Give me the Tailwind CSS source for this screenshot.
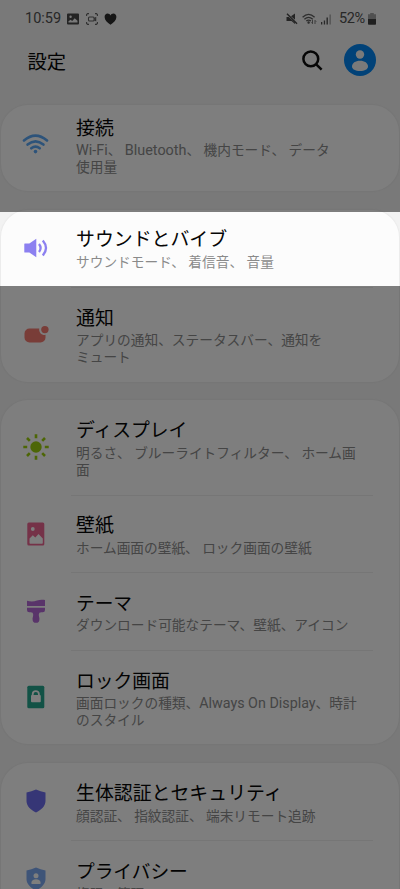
<!DOCTYPE html>
<html lang="ja">
<head>
<meta charset="utf-8">
<title>設定</title>
<script src="https://cdn.jsdelivr.net/npm/@tailwindcss/browser@4"></script>
</head>
<body class="bg-[#f2f2f2]">
<div class="relative flex h-[889px] w-[400px] flex-col overflow-hidden bg-[#f2f2f2] font-['Roboto','Noto_Sans_CJK_JP',sans-serif] text-[#060606]">

  <!-- Status bar -->
  <header class="flex h-[36px] shrink-0 items-center pt-[1px] pr-[24px] pl-[25px] text-[#505050]">
    <span class="w-[42px] pt-[1px] text-[14.5px]">10:59</span>
    <svg class="size-[12px]" viewBox="0 0 12 12"><path fill="#484848" fill-rule="evenodd" d="M1 .5h10q1 0 1 1v9q0 1-1 1H1q-1 0-1-1v-9q0-1 1-1ZM1.5 9.5h9V7.8L7.7 5.2 5.2 8 3.6 6.7 1.5 8.3ZM3.6 2.5a1.2 1.2 0 1 0 0 2.4 1.2 1.2 0 0 0 0-2.4Z"/></svg>
    <svg class="ml-[7px] size-[12px]" viewBox="0 0 12 12" fill="none" stroke="#606060" stroke-width="1.1"><path d="M.6 3V1.6L1.6.6H3M9 .6h1.4l1 1V3M11.4 9v1.4l-1 1H9M3 11.4H1.6l-1-1V9"/><rect x="2.5" y="4" width="5.6" height="4" rx="1"/><path d="m8 5.6 1.7-1v3L8 6.8"/></svg>
    <svg class="ml-[6px] h-[12px] w-[13px]" viewBox="0 0 13 12"><path fill="#2c2c2c" d="M6.5 11.8C3.2 9.6.6 7 .6 4c0-2 1.4-3.4 3-3.4 1.3 0 2.3.7 2.9 1.8C7.1 1.3 8.1.6 9.4.6c1.6 0 3 1.4 3 3.4 0 3-2.6 5.600-5.900 7.800Z"/></svg>
    <div class="ml-auto flex items-center">
      <svg class="size-[12px]" viewBox="0 0 12 12"><path fill="#484848" d="M.5 4h2.200L9 9.500V11L5.500 8H.5ZM5 3.300 9 .6v6.200Z"/><path d="m1 .8 10 10" stroke="#484848" stroke-width="1.400"/></svg>
      <svg class="ml-[4px] h-[12px] w-[15px]" viewBox="0 0 15 12" fill="none" stroke="#5c5c5c" stroke-width="1.300"><path d="M.6 4.200q6-5.600 12 0M2.400 6.300q4.200-3.800 8.400 0M4.300 8.100q2.300-2 4.600 0"/><circle cx="6.600" cy="9.600" r=".6" fill="#484848"/><path stroke-width=".8" d="M10.500 7v3.600l-1.200-1.200M13 11V7.400l1.200 1.200"/></svg>
      <svg class="ml-[4px] h-[12px] w-[11px]" viewBox="0 0 11 12"><path fill="#505050" d="M0 9h1.300v2.500H0ZM2.800 7.500h1.300v4H2.800ZM5.500 4.500h1.400v7H5.500Z"/><path fill="#a0a0a0" d="M8.500 1.500h1.300v10H8.500Z"/></svg>
      <span class="ml-[7px] w-[29px] pt-[1px] text-[14.500px] tracking-[-0.400px]">52%</span>
      <svg class="h-[12px] w-[8px]" viewBox="0 0 8 12"><path fill="#a0a0a0" d="M2.200 0h3.600v1.200H8V6H0V1.200h2.200Z"/><path fill="#404040" d="M0 6h8v5q0 .8-.8.8H.8Q0 11.800 0 11Z"/></svg>
    </div>
  </header>

  <!-- Title bar -->
  <div class="flex h-[68.500px] shrink-0 items-start pr-[24px] pl-[27.500px]">
    <h1 class="mt-[13.500px] text-[19.300px] leading-[26px]">設定</h1>
    <svg class="mt-[13.500px] ml-auto size-[21px]" viewBox="0 0 21 21" fill="none" stroke="#0c0c0c" stroke-width="2.500"><circle cx="8.800" cy="8.900" r="7.400"/><path d="m14 14.200 5.600 5.500"/></svg>
    <svg class="mt-[8px] ml-[21px] size-[32px]" viewBox="0 0 32 32"><circle cx="16" cy="16" r="16" fill="#0285f0"/><circle cx="16" cy="10.500" r="4.200" fill="#f4f4f4"/><path fill="#f4f4f4" d="M8 22.500c0-3.300 3.400-5.700 8-5.700s8 2.400 8 5.700c0 2.700-3.400 4.600-8 4.600s-8-1.900-8-4.600Z"/></svg>
  </div>

  <main class="flex flex-col gap-[18.500px] px-px">
    <section class="rounded-[27px] bg-[#fcfcfc] shadow-[0_0_1px_1px_#ebebeb]">
      <div class="flex h-[86.500px]">
        <div class="flex w-[75px] shrink-0 items-center pb-[7px] pl-[21px]">
          <svg class="h-[20px] w-[27px]" viewBox="0 0 27 20" fill="none" stroke="#5aa7f4" stroke-width="2.600" stroke-linecap="round"><path d="M2 6.500Q13.500-3.300 25 6.500M5.600 10.600Q13.500 4 21.400 10.600M9.300 14.300q4.200-3.400 8.400 0"/><circle cx="13.500" cy="17.600" r="1.800" fill="#5aa7f4" stroke="none"/></svg>
        </div>
        <div class="pt-[12px] whitespace-nowrap">
          <h2 class="text-[18.900px] leading-[24px]">接続</h2>
          <p class="mt-[1.500px] text-[13.700px] leading-[17px] text-[#8a8a8a]"><span class="text-[14.400px]">Wi-Fi</span>、 <span class="text-[14.400px]">Bluetooth</span>、 機内モード、 データ<br>使用量</p>
        </div>
      </div>
    </section>

    <section class="rounded-[27px] bg-[#fcfcfc] shadow-[0_0_1px_1px_#ebebeb]">
      <div class="flex h-[77.500px]">
        <div class="flex w-[75px] shrink-0 items-center pl-[23px]">
          <svg class="h-[20px] w-[24px]" viewBox="0 0 24 20"><path fill="#8c80f0" d="M.8 5.500h4.500L12.300.8v18.400l-7-4.700H.8q-.5 0-.5-.5V6q0-.5.500-.5Z"/><path d="M15 6q3.200 4 0 8M18.800 2.500q6.400 7.500 0 15" fill="none" stroke="#8c80f0" stroke-width="2.300"/></svg>
        </div>
        <div class="pt-[18.500px] whitespace-nowrap">
          <h2 class="text-[18.900px] leading-[24px]">サウンドとバイブ</h2>
          <p class="mt-[2px] text-[13.700px] leading-[17px] text-[#8a8a8a]">サウンドモード、 着信音、 音量</p>
        </div>
      </div>
      <div class="mr-[26px] ml-[70px] h-px bg-[#ececec]"></div>
      <div class="flex h-[93.500px]">
        <div class="flex w-[75px] shrink-0 items-center pb-[2px] pl-[23px]">
          <svg class="h-[18px] w-[26px]" viewBox="0 0 26 18"><path fill="#f27a70" d="M5.500 3.500h9.800a5.200 5.200 0 0 0 6.200 6.300v2.700a5 5 0 0 1-5 5H5.500a5 5 0 0 1-5-5v-4a5 5 0 0 1 5-5Z"/><circle cx="20.900" cy="4.600" r="3.700" fill="#f27a70"/></svg>
        </div>
        <div class="pt-[18.500px] whitespace-nowrap">
          <h2 class="text-[18.900px] leading-[24px]">通知</h2>
          <p class="mt-[1.500px] text-[13.700px] leading-[17px] text-[#8a8a8a]">アプリの通知、ステータスバー、通知を<br>ミュート</p>
        </div>
      </div>
    </section>

    <section class="rounded-[27px] bg-[#fcfcfc] shadow-[0_0_1px_1px_#ebebeb]">
      <div class="flex h-[94.500px]">
        <div class="flex w-[75px] shrink-0 items-center pl-[21.500px]">
          <svg class="size-[26px]" viewBox="0 0 26 26" stroke="#9bcc0c" stroke-width="2.600"><circle cx="13" cy="13" r="5.700" fill="#9bcc0c" stroke="none"/><path d="M13 .3v3.900M13 21.800v3.900M.3 13h3.900M21.800 13h3.900M4 4l2.800 2.800M19.200 19.200 22 22M4 22l2.800-2.800M19.200 6.800 22 4"/></svg>
        </div>
        <div class="pt-[19px] whitespace-nowrap">
          <h2 class="text-[18.800px] leading-[24px]">ディスプレイ</h2>
          <p class="mt-[1.500px] text-[13.700px] leading-[17px] text-[#8a8a8a]">明るさ、 ブルーライトフィルター、 ホーム画<br>面</p>
        </div>
      </div>
      <div class="mr-[26px] ml-[70px] h-px bg-[#ececec]"></div>
      <div class="flex h-[76.500px]">
        <div class="flex w-[75px] shrink-0 items-center pl-[26px]">
          <svg class="h-[24px] w-[18px]" viewBox="0 0 18 24"><rect x=".3" y=".5" width="17" height="23" rx="1.500" fill="#ea6490"/><circle cx="5.800" cy="7" r="1.900" fill="#fcfcfc"/><path fill="#fcfcfc" d="M2.500 21v-4.500l3.300-3.200 2.500 2.300 3.200-3.600 4.300 4.500V21q0 .8-.8.800H3.300q-.8 0-.8-.8Z"/></svg>
        </div>
        <div class="pt-[18px] whitespace-nowrap">
          <h2 class="text-[18.900px] leading-[24px]">壁紙</h2>
          <p class="mt-[2px] text-[13.700px] leading-[17px] text-[#8a8a8a]">ホーム画面の壁紙、 ロック画面の壁紙</p>
        </div>
      </div>
      <div class="mr-[26px] ml-[70px] h-px bg-[#ececec]"></div>
      <div class="flex h-[76.500px]">
        <div class="flex w-[75px] shrink-0 items-center pl-[26px]">
          <svg class="h-[24px] w-[18px]" viewBox="0 0 18 24"><path fill="#b268d4" d="M0 1.700c4 1.200 7 .8 10-.2 3-.9 5.500-1 8-.4v6H0ZM0 8.800h18v2.200q0 2.200-2.200 2.200h-1.600q-2.400 0-2.400 2.200 0 1.600.4 2.800.4 1.400.2 2.200a3.400 3.400 0 0 1-6.800 0q-.2-.8.2-2.200.4-1.200.4-2.800 0-2.200-2.400-2.200H2.200Q0 13.200 0 11Z"/></svg>
        </div>
        <div class="pt-[18.500px] whitespace-nowrap">
          <h2 class="text-[18.700px] leading-[24px]">テーマ</h2>
          <p class="mt-[1.500px] text-[13.700px] leading-[17px] text-[#8a8a8a]">ダウンロード可能なテーマ、壁紙、アイコン</p>
        </div>
      </div>
      <div class="mr-[26px] ml-[70px] h-px bg-[#ececec]"></div>
      <div class="flex h-[93.500px]">
        <div class="flex w-[75px] shrink-0 items-center pl-[26px]">
          <svg class="h-[24px] w-[18px]" viewBox="0 0 18 24"><rect x=".3" y=".7" width="17" height="22.600" rx="1.500" fill="#24a48c"/><path d="M5.700 11V9.200a3.100 3.100 0 0 1 6.200 0V11" fill="none" stroke="#fcfcfc" stroke-width="1.800"/><rect x="4" y="10" width="9.800" height="7.300" rx="1" fill="#fcfcfc"/></svg>
        </div>
        <div class="pt-[19px] whitespace-nowrap">
          <h2 class="text-[18.800px] leading-[24px]">ロック画面</h2>
          <p class="mt-[1px] text-[13.700px] leading-[17px] text-[#8a8a8a]">画面ロックの種類、<span class="text-[14.300px]">Always On Display</span>、時計<br>のスタイル</p>
        </div>
      </div>
    </section>

    <section class="rounded-t-[27px] bg-[#fcfcfc] shadow-[0_0_1px_1px_#ebebeb]">
      <div class="flex h-[77.500px]">
        <div class="flex w-[75px] shrink-0 items-center pl-[25px]">
          <svg class="h-[24px] w-[20px]" viewBox="0 0 20 24"><path fill="#6c6cec" d="M10 .5q4.500 2 9.500 3V12c0 5-4.200 9-9.500 11.500C4.700 21 .5 17 .5 12V3.500q5-1 9.500-3Z"/></svg>
        </div>
        <div class="pt-[19px] whitespace-nowrap">
          <h2 class="text-[18.900px] leading-[24px]">生体認証とセキュリティ</h2>
          <p class="mt-[2px] text-[13.700px] leading-[17px] text-[#8a8a8a]">顔認証、 指紋認証、 端末リモート追跡</p>
        </div>
      </div>
      <div class="mr-[26px] ml-[70px] h-px bg-[#ececec]"></div>
      <div class="flex h-[76.500px]">
        <div class="flex w-[75px] shrink-0 items-center pl-[25px]">
          <svg class="h-[24px] w-[20px]" viewBox="0 0 20 24"><path fill="#7ca8f0" d="M10 .5q4.500 2 9.500 3V12c0 5-4.200 9-9.500 11.500C4.700 21 .5 17 .5 12V3.500q5-1 9.500-3Z"/><circle cx="10" cy="8.800" r="2.500" fill="#fcfcfc"/><path fill="#fcfcfc" d="M6 17q-.7 0-.7-.9c0-2.300 2-3.900 4.700-3.900s4.700 1.600 4.700 3.900q0 .9-.7.900Z"/></svg>
        </div>
        <div class="pt-[18.500px] whitespace-nowrap">
          <h2 class="text-[18.700px] leading-[24px]">プライバシー</h2>
          <p class="mt-[2px] text-[13.700px] leading-[17px] text-[#8a8a8a]">権限の管理</p>
        </div>
      </div>
    </section>
  </main>

  <!-- Spotlight: dims everything except the sound row -->
  <div class="absolute inset-x-0 top-0 h-[212px] bg-black/50"></div>
  <div class="absolute inset-x-0 top-[285.500px] bottom-0 bg-black/50"></div>
</div>
</body>
</html>
